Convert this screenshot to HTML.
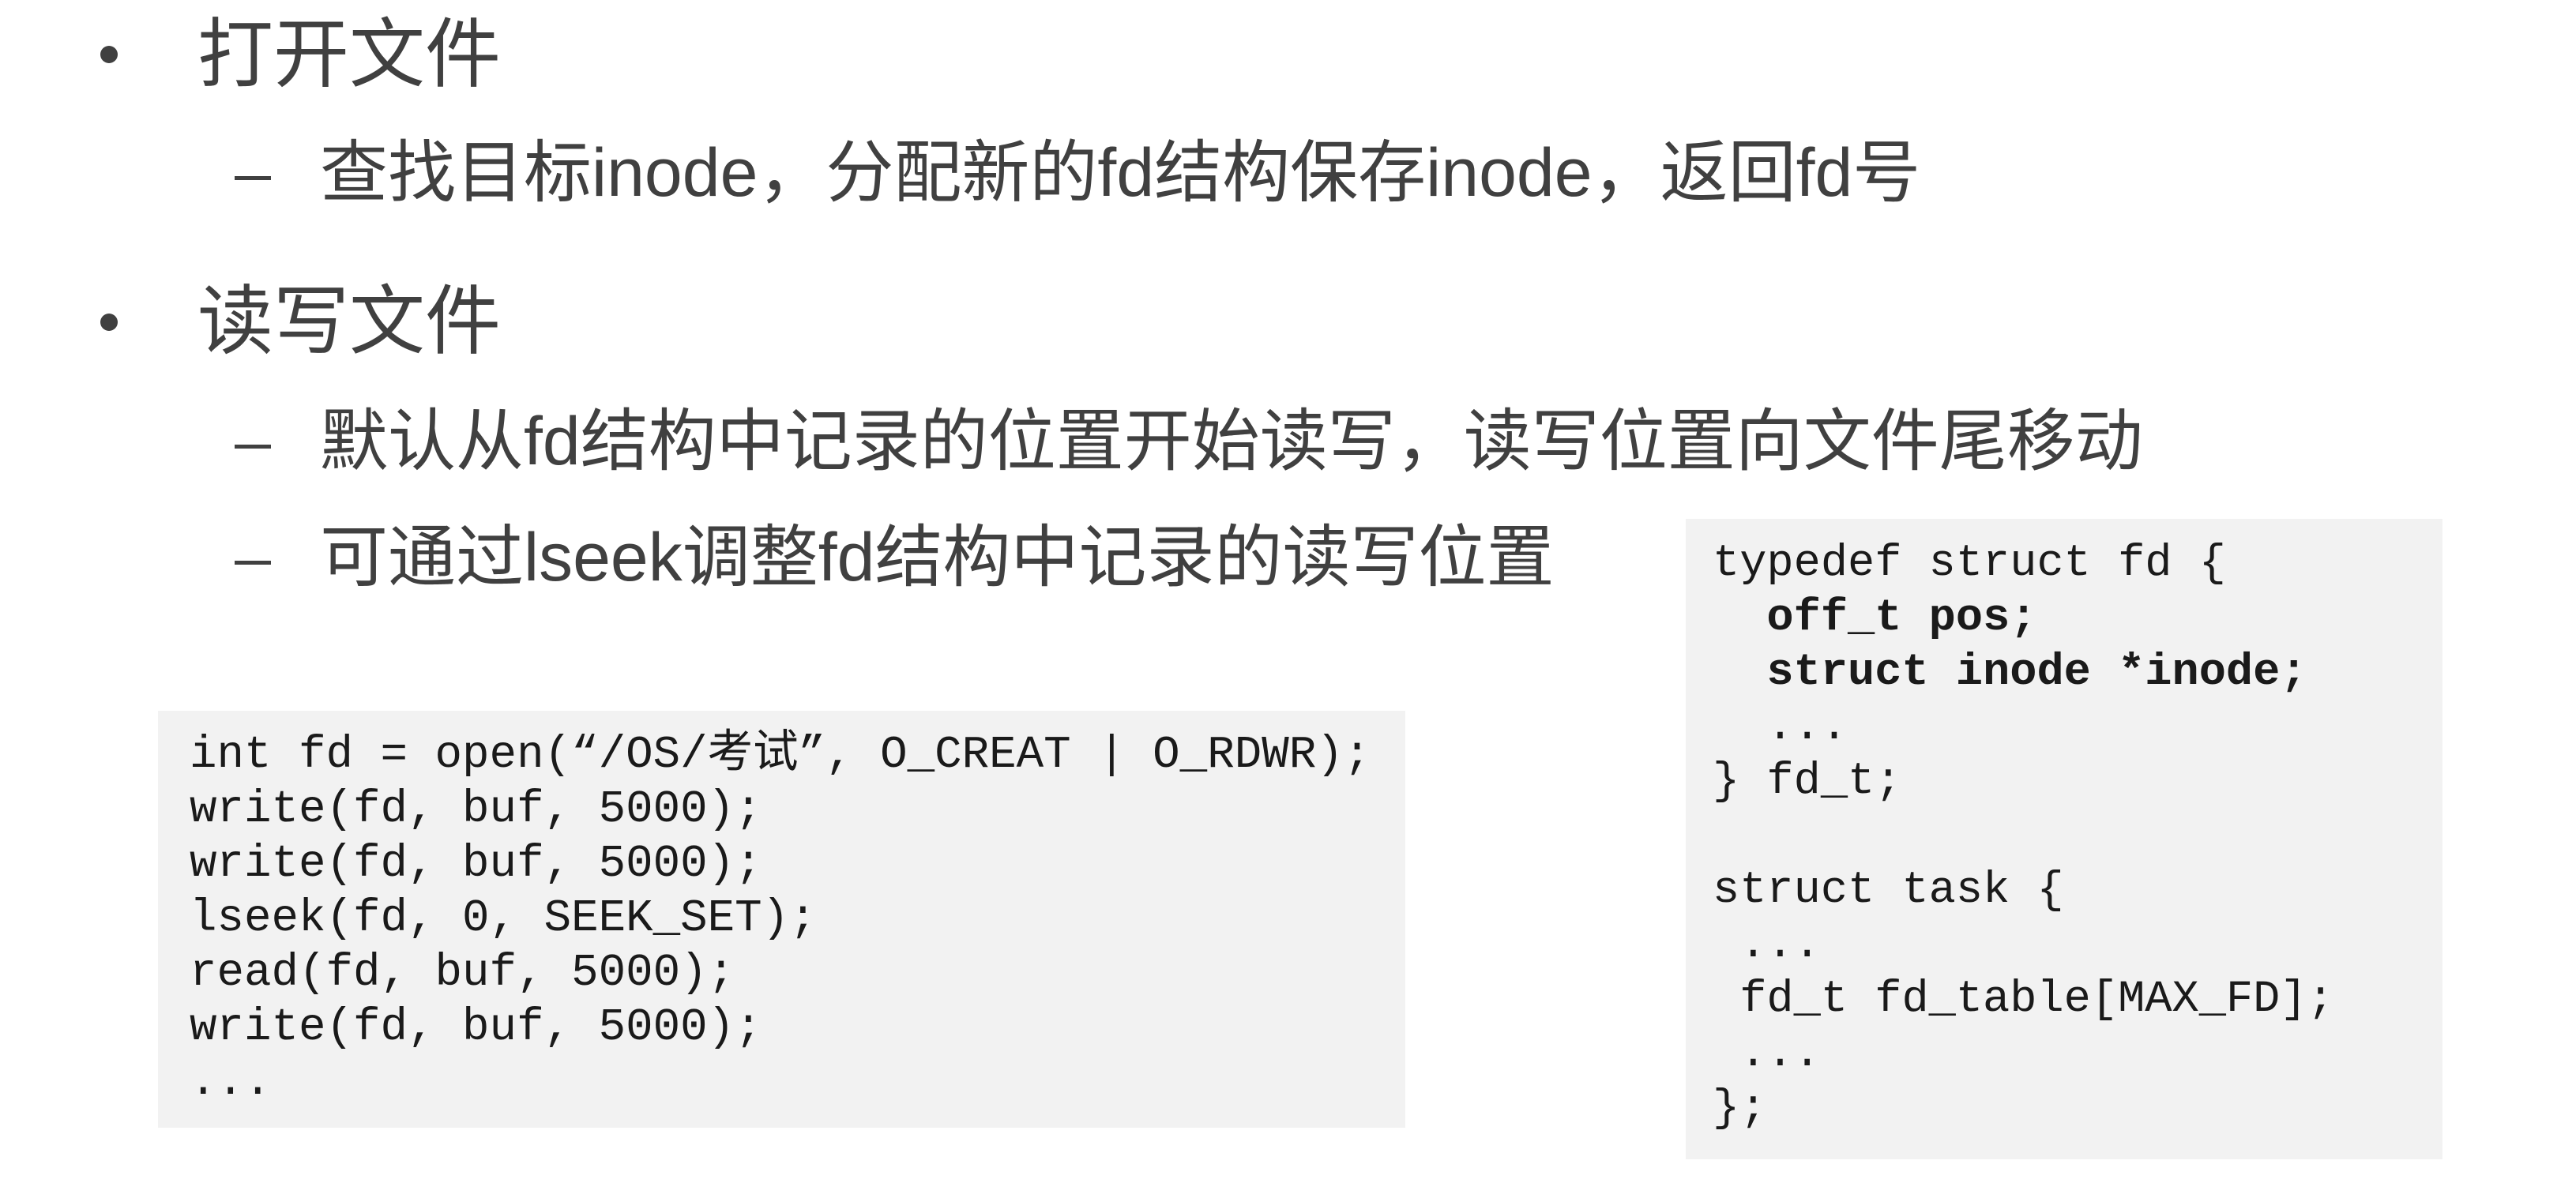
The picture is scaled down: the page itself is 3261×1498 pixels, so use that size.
<!DOCTYPE html>
<html><head><meta charset="utf-8"><style>
body{margin:0;width:3261px;height:1498px;background:#fff;position:relative;overflow:hidden;font-family:"Liberation Sans","Noto Sans CJK SC",sans-serif;color:#404040}
.t{position:absolute;white-space:nowrap;line-height:1}
.dot{position:absolute;width:22px;height:22px;border-radius:50%;background:#404040}
.dash{position:absolute;width:46px;height:5px;background:#404040}
.box{position:absolute;background:#f2f2f2}
pre{position:absolute;margin:0;font-family:"Liberation Mono","Noto Sans CJK SC",monospace;color:#1a1a1a;line-height:69px}
</style></head><body>
<div class="dot" style="left:127px;top:58px"></div>
<div class="t" style="left:250px;top:22px;font-size:96px">打开文件</div>
<div class="dash" style="left:297px;top:223px"></div>
<div class="t" style="left:405px;top:176px;font-size:86px">查找目标inode，分配新的fd结构保存inode，返回fd号</div>
<div class="dot" style="left:127px;top:397px"></div>
<div class="t" style="left:250px;top:360px;font-size:96px">读写文件</div>
<div class="dash" style="left:297px;top:563px"></div>
<div class="t" style="left:405px;top:516px;font-size:86px">默认从fd结构中记录的位置开始读写，读写位置向文件尾移动</div>
<div class="dash" style="left:297px;top:710px"></div>
<div class="t" style="left:405px;top:663px;font-size:86px">可通过lseek调整fd结构中记录的读写位置</div>
<div class="box" style="left:200px;top:900px;width:1579px;height:528px"></div>
<pre style="left:240px;top:922px;font-size:57.5px">int fd = open(“/OS/考试”, O_CREAT | O_RDWR);
write(fd, buf, 5000);
write(fd, buf, 5000);
lseek(fd, 0, SEEK_SET);
read(fd, buf, 5000);
write(fd, buf, 5000);
...</pre>
<div class="box" style="left:2134px;top:657px;width:958px;height:811px"></div>
<pre style="left:2168px;top:680px;font-size:57px">typedef struct fd {
  <b>off_t pos;</b>
  <b>struct inode *inode;</b>
  ...
} fd_t;

struct task {
 ...
 fd_t fd_table[MAX_FD];
 ...
};</pre>
</body></html>
